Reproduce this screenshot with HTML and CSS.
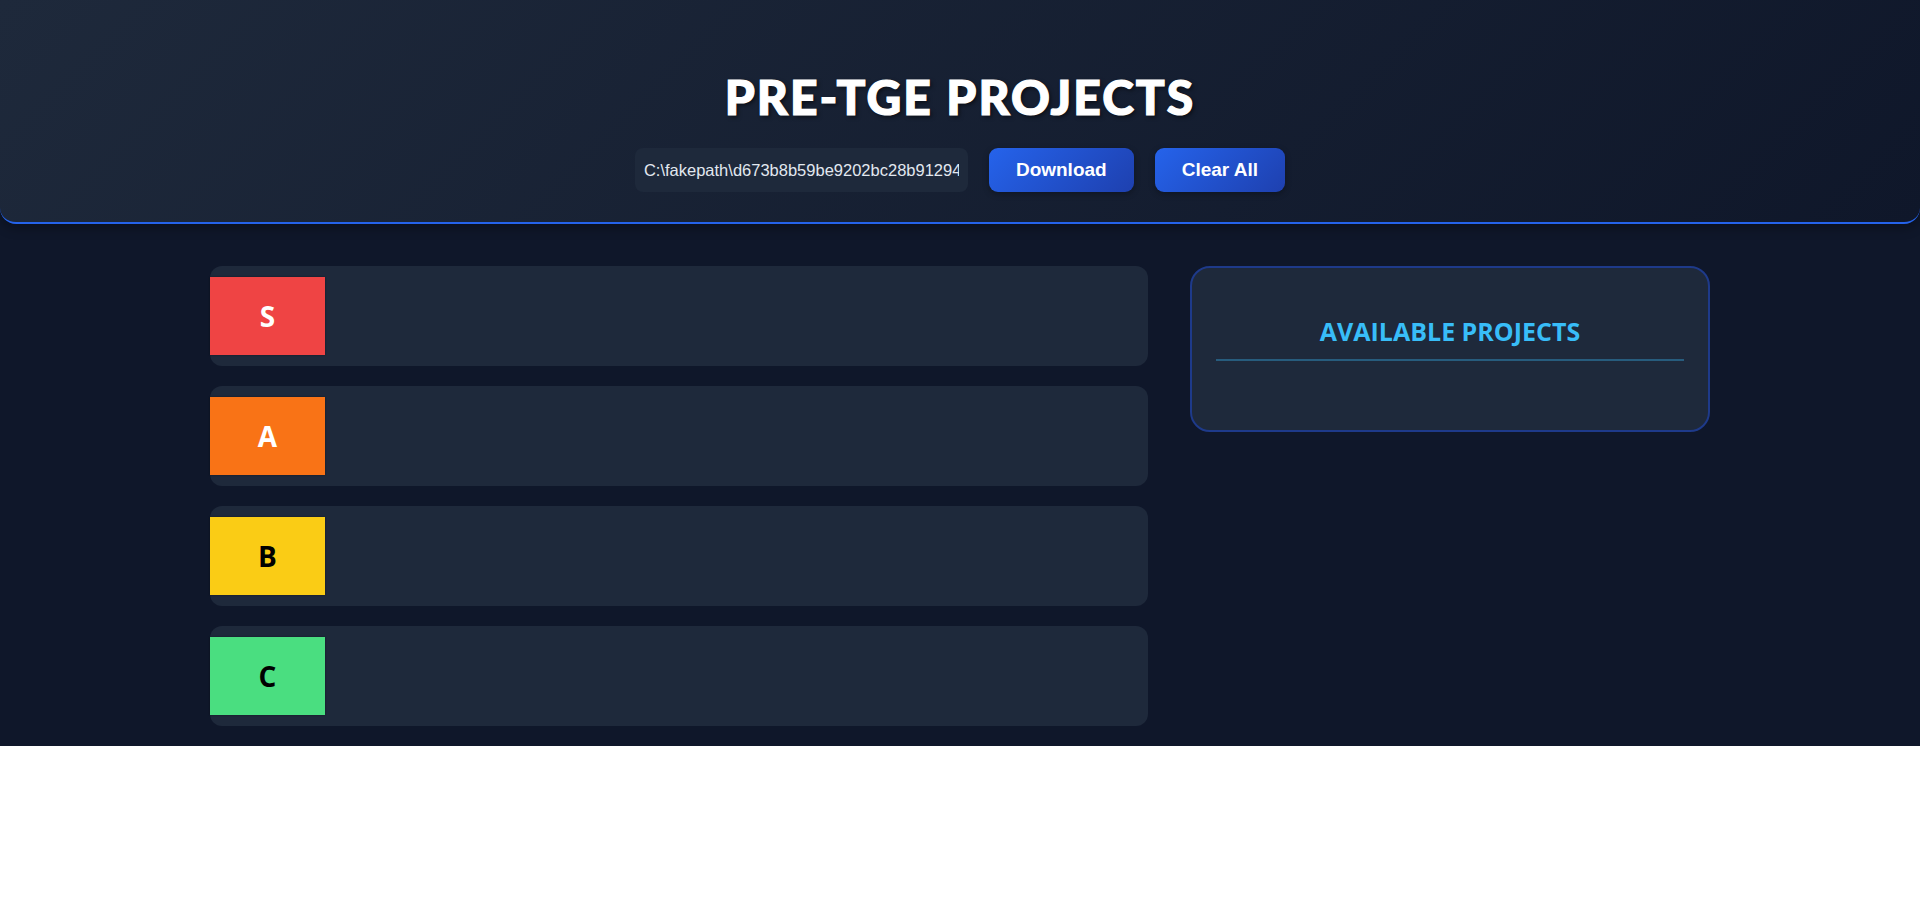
FILE: index.html
```html
<!DOCTYPE html>
<html lang="en">
<head>
<meta charset="utf-8">
<title>Pre-TGE Projects</title>
<link rel="stylesheet" href="styles.css">
</head>
<body>
<div class="app">
  <header class="header">
    <h1 class="title">PRE-TGE PROJECTS</h1>
    <div class="controls">
      <input class="file-field" type="text" readonly value="C:\fakepath\d673b8b59be9202bc28b91294a.png">
      <button class="btn">Download</button>
      <button class="btn">Clear All</button>
    </div>
  </header>
  <main class="main">
    <section class="tiers">
      <div class="tier"><div class="tier-label tier-s">S</div><div class="tier-items"></div></div>
      <div class="tier"><div class="tier-label tier-a">A</div><div class="tier-items"></div></div>
      <div class="tier"><div class="tier-label tier-b">B</div><div class="tier-items"></div></div>
      <div class="tier"><div class="tier-label tier-c">C</div><div class="tier-items"></div></div>
    </section>
    <aside class="panel">
      <h2 class="panel-title">AVAILABLE PROJECTS</h2>
      <div class="panel-list"></div>
    </aside>
  </main>
</div>
</body>
</html>
```
FILE: styles.css
```css
html, body {
  margin: 0;
  padding: 0;
  background: #ffffff;
}
body {
  font-family: "Open Sans", "Noto Sans", sans-serif;
}
.app {
  background: #0f172a;
  padding-bottom: 20px;
}
.header {
  background: linear-gradient(135deg, #1e293b 0%, #0f172a 100%);
  border-bottom: 2px solid #2563eb;
  border-radius: 0 0 16px 16px;
  padding: 68px 20px 30px;
  display: flex;
  flex-direction: column;
  align-items: center;
  box-shadow: 0 4px 12px rgba(0, 0, 0, 0.3);
}
.title {
  margin: 0 0 22px;
  font-family: Lato, "Open Sans", sans-serif;
  font-weight: 900;
  font-size: 48px;
  line-height: 58px;
  color: #ffffff;
  letter-spacing: 2px;
  -webkit-text-stroke: 1.2px #ffffff;
  text-shadow: 2px 2px 4px rgba(0, 0, 0, 0.6);
}
.controls {
  display: flex;
  gap: 21px;
  align-items: center;
}
.file-field {
  width: 333px;
  height: 44px;
  box-sizing: border-box;
  padding: 0 9px;
  border: none;
  border-radius: 8px;
  background: #1e293b;
  color: #e2e8f0;
  font-family: "Liberation Sans", Arial, sans-serif;
  font-size: 16.5px;
  outline: none;
}
.btn {
  height: 44px;
  box-sizing: border-box;
  padding: 0 27px;
  border: none;
  border-radius: 9px;
  background: linear-gradient(135deg, #2563eb 0%, #1e40af 100%);
  color: #ffffff;
  font-family: "Liberation Sans", Arial, sans-serif;
  font-weight: 700;
  font-size: 19px;
  cursor: pointer;
  box-shadow: 0 2px 6px rgba(0, 0, 0, 0.3);
}
.main {
  width: 1500px;
  margin: 42px auto 0;
  display: grid;
  grid-template-columns: 1fr 520px;
  gap: 42px;
  align-items: start;
}
.tiers {
  display: flex;
  flex-direction: column;
  gap: 20px;
}
.tier {
  background: #1e293b;
  border-radius: 12px;
  padding: 11px 0;
  display: flex;
  min-height: 100px;
  box-sizing: border-box;
}
.tier-label {
  width: 115px;
  min-height: 78px;
  display: flex;
  align-items: center;
  justify-content: center;
  font-family: "Open Sans", "Noto Sans", sans-serif;
  font-weight: 700;
  font-size: 28px;
  box-shadow: 0 0 2px rgba(0, 0, 0, 0.4);
}
.tier-items {
  flex: 1;
}
.tier-s { background: #ef4444; color: #ffffff; }
.tier-a { background: #f97316; color: #ffffff; }
.tier-b { background: #facc15; color: #000000; }
.tier-c { background: #4ade80; color: #000000; }
.panel {
  background: #1e293b;
  border: 2px solid #1e3a8a;
  border-radius: 20px;
  padding: 46px 24px 24px;
}
.panel-title {
  margin: 0;
  padding-bottom: 11px;
  border-bottom: 2px solid rgba(56, 189, 248, 0.35);
  text-align: center;
  color: #38bdf8;
  font-family: "Open Sans", "Noto Sans", sans-serif;
  font-weight: 700;
  font-size: 25px;
  line-height: 34px;
}
.panel-list {
  min-height: 45px;
}
```
